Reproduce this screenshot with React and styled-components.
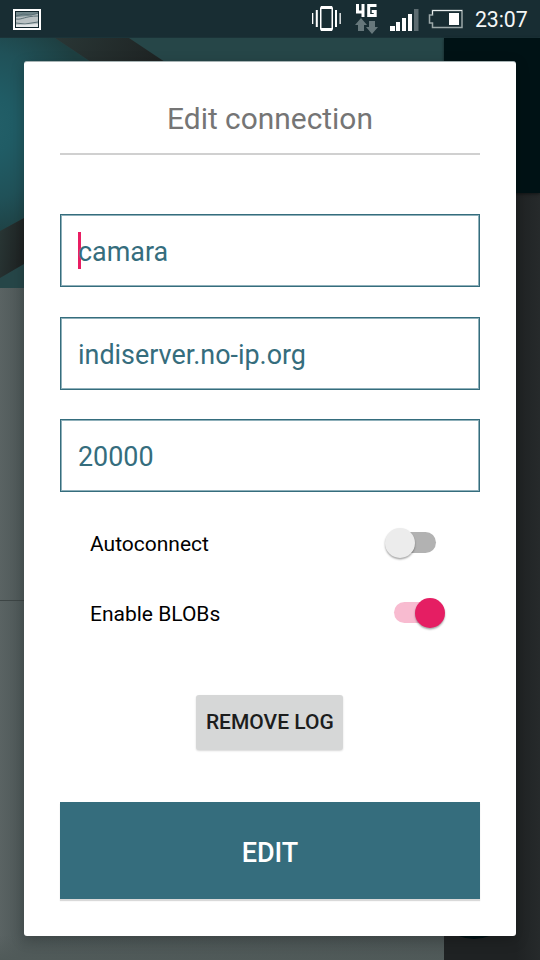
import React from 'react';
import styled, { createGlobalStyle } from 'styled-components';

const GlobalStyle = createGlobalStyle`
  * { box-sizing: border-box; }
  body { margin: 0; font-family: Roboto, "Liberation Sans", sans-serif; background: #232728; }
`;

const Screen = styled.div`
  position: relative;
  width: 540px;
  height: 960px;
  overflow: hidden;
  display: flex;
  flex-direction: column;
`;

const StatusBar = styled.header`
  height: 38px;
  flex: none;
  display: flex;
  align-items: flex-start;
  justify-content: space-between;
  background: #182d33;
  border-bottom: 1px solid #1b3338;
`;

const StatusGlyphs = styled.svg`
  display: block;
  flex: none;
`;

const StatusRight = styled.div`
  display: flex;
  align-items: flex-start;
`;

const Clock = styled.span`
  width: 65px;
  font-size: 21.3px;
  line-height: 40px;
  letter-spacing: -0.1px;
  color: #f4f6f6;
  white-space: nowrap;
`;

const Backdrop = styled.div`
  flex: 1;
  display: flex;
`;

const Drawer = styled.aside`
  width: 444px;
  display: flex;
  flex-direction: column;
  background: linear-gradient(90deg, #5a6363 0, #4d5757 24px, #4b5454 100%);
`;

const DrawerArt = styled.svg`
  display: block;
  flex: none;
`;

const DrawerSection = styled.div`
  height: ${({ $height }) => $height}px;
  border-bottom: 1px solid #3d4545;
`;

const DrawerFoot = styled.div`
  flex: 1;
  background: linear-gradient(180deg, transparent 334px, #505a59 359px);
`;

const AppPane = styled.div`
  flex: 1;
  display: flex;
  flex-direction: column;
  background: linear-gradient(90deg, #1f2223 0, #1f2223 72px, #262a2b 96px);
`;

const AppToolbar = styled.div`
  height: 155px;
  background: #001215;
  box-shadow: 0 1px 3px rgba(0, 0, 0, 0.5);
`;

const Fab = styled.div`
  width: 84px;
  height: 84px;
  margin: 662px 0 0 -12px;
  border-radius: 50%;
  background: #001215;
`;

const Dialog = styled.section`
  position: absolute;
  left: 24px;
  top: 61px;
  width: 492px;
  height: 875px;
  padding: 36px 36px 0;
  display: flex;
  flex-direction: column;
  background: #fff;
  border-top: 1px solid #a7b3b4;
  border-radius: 3px;
  box-shadow: 0 4px 14px rgba(0, 0, 0, 0.22);
`;

const Title = styled.h1`
  margin: 0;
  height: 57px;
  flex: none;
  border-bottom: 2px solid #d0d0d0;
  font-size: 29.9px;
  font-weight: 400;
  line-height: 42px;
  text-align: center;
  color: #757575;
`;

const Fields = styled.div`
  margin-top: 59px;
  display: flex;
  flex-direction: column;
  gap: 29.5px;
`;

const Field = styled.div`
  height: 73px;
  padding: 3px 0 0 17px;
  display: flex;
  align-items: center;
  border: 1px solid #356d7d;
  box-shadow: inset 0 0 0 1px #8fb0ba;
  font-size: 26.9px;
  line-height: 36px;
  color: #356d7d;
`;

const Caret = styled.span`
  width: 2.5px;
  height: 37px;
  margin: -3px -2.5px 0 0;
  background: #e91e63;
`;

const Options = styled.div`
  margin-top: 16.500px;
  padding: 0 35px 0 30px;
`;

const OptionRow = styled.div`
  height: 70px;
  display: flex;
  align-items: center;
  justify-content: space-between;
  font-size: 21px;
  color: #000;
`;

const Track = styled.span`
  width: 42px;
  height: 21px;
  margin-right: 9px;
  transform: translateY(-1px);
  display: flex;
  align-items: center;
  justify-content: ${({ $on }) => ($on ? 'flex-end' : 'flex-start')};
  border-radius: 11px;
  background: ${({ $on }) => ($on ? '#f8bbd0' : '#b2b2b2')};
`;

const Thumb = styled.span`
  width: 30px;
  height: 30px;
  flex: none;
  margin: 0 ${({ $on }) => ($on ? '-9px 0 0' : '0 0 -9px')};
  border-radius: 50%;
  background: ${({ $on }) => ($on ? '#e51e63' : '#ececec')};
  box-shadow: 0 1.5px 2px rgba(0, 0, 0, 0.35);
`;

const RemoveButton = styled.button`
  width: 147px;
  height: 55px;
  margin: 46px 0 0 136.300px;
  padding: 0;
  flex: none;
  border: 0;
  border-radius: 3px;
  background: #d6d7d7;
  box-shadow: 0 1px 2px rgba(0, 0, 0, 0.16);
  font: 500 21px/54px Roboto, sans-serif;
  color: #1c1d1d;
  white-space: nowrap;
`;

const EditButton = styled.button`
  height: 97px;
  margin-top: 52px;
  padding: 5px 0 0;
  flex: none;
  border: 0;
  background: #356d7d;
  box-shadow: 0 2px 1px rgba(0, 0, 0, 0.15);
  font: 500 27px/36px Roboto, sans-serif;
  color: #fff;
`;

const values = ['camara', 'indiserver.no-ip.org', '20000'];
const options = [
  { label: 'Autoconnect', on: false },
  { label: 'Enable BLOBs', on: true },
];

function ScreenshotIcon() {
  return (
    <StatusGlyphs width="60" height="37" viewBox="0 0 60 37">
      <path d="M13 9h28v21H13z" fill="#fff" />
      <path d="M15 11h24v17H15z" fill="#10242b" />
      <path d="M16 12h22v15H16z" fill="#b9c1c3" />
      <path d="M16 12h22v2l-10 2-12 1z" fill="#71868b" />
      <path d="M16 16l7-2 8 1 7-2M16 19c6 1 9-3 22-3M16 23l9 1 13-2" fill="none" stroke="#5b7076" />
      <path d="M16 25l22-1v3H16z" fill="#e4e8e9" />
    </StatusGlyphs>
  );
}

function SystemIcons() {
  return (
    <StatusGlyphs width="175" height="37" viewBox="300 0 175 37">
      <g fill="#fff">
        <path fillRule="evenodd" d="M321 6h11l1 2v21l-1 2h-11l-1-2V8zM321.500 9v19h10V9z" />
        <path d="M312 13h1.300v11H312zM315.800 10h2v17h-2zM335 10h2v17h-2zM339.500 13h1.300v11h-1.300z" />
      </g>
      <path d="M357.500 4v8h7M363 4v13M376.500 5.500h-7.800v10h6.500V11.500h-3.500" fill="none" stroke="#fff" strokeWidth="3" />
      <path d="M355 25l6-7 6 7h-3v6h-6v-6zM366 27l6 7 6-7h-3v-6h-6v6z" fill="#66777b" />
      <path d="M390 26h5v5h-5zM396 22h4v9h-4zM402 18h4v13h-4zM408 14h4v17h-4z" fill="#fff" />
      <path d="M414 9h4.500v22H414z" fill="#5d6c71" />
      <path d="M432.500 10.500H462v17H432.500v-4.500H429.500v-8H432.500z" fill="none" stroke="#9aa7a8" strokeWidth="1.500" />
      <path d="M432.500 14.500v-4H462" fill="none" stroke="#e8eeee" />
      <path d="M449 13h10v12h-10z" fill="#fff" />
    </StatusGlyphs>
  );
}

function HeaderArt() {
  return (
    <DrawerArt width="444" height="250" viewBox="0 38 444 250">
      <defs>
        <radialGradient id="teal" gradientUnits="userSpaceOnUse" cx="-22" cy="125" r="118">
          <stop offset="0" stopColor="#24616a" />
          <stop offset="0.300" stopColor="#205c65" />
          <stop offset="0.650" stopColor="#205158" />
          <stop offset="1" stopColor="#1e3f41" />
        </radialGradient>
        <linearGradient id="band" x1="0" y1="0" x2="1" y2="0.300">
          <stop offset="0" stopColor="#293635" />
          <stop offset="1" stopColor="#1e2323" />
        </linearGradient>
      </defs>
      <path d="M0 38h444v250H0z" fill="#264648" />
      <path d="M0 38h55l36 24v140L24 218 0 231z" fill="url(#teal)" />
      <path d="M55 38h74l36 24v40H91V62z" fill="url(#band)" />
      <path d="M0 231l24-13v46L0 278z" fill="url(#band)" />
    </DrawerArt>
  );
}

export default function App() {
  return (
    <Screen>
      <GlobalStyle />
      <StatusBar>
        <ScreenshotIcon />
        <StatusRight>
          <SystemIcons />
          <Clock>23:07</Clock>
        </StatusRight>
      </StatusBar>
      <Backdrop>
        <Drawer>
          <HeaderArt />
          <DrawerSection $height={313} />
          <DrawerFoot />
        </Drawer>
        <AppPane>
          <AppToolbar />
          <Fab />
        </AppPane>
      </Backdrop>
      <Dialog>
        <Title>Edit connection</Title>
        <Fields>
          {values.map((value, index) => (
            <Field key={value}>
              {index === 0 && <Caret />}
              {value}
            </Field>
          ))}
        </Fields>
        <Options>
          {options.map(({ label, on }) => (
            <OptionRow key={label}>
              {label}
              <Track $on={on}><Thumb $on={on} /></Track>
            </OptionRow>
          ))}
        </Options>
        <RemoveButton>REMOVE LOG</RemoveButton>
        <EditButton>EDIT</EditButton>
      </Dialog>
    </Screen>
  );
}
